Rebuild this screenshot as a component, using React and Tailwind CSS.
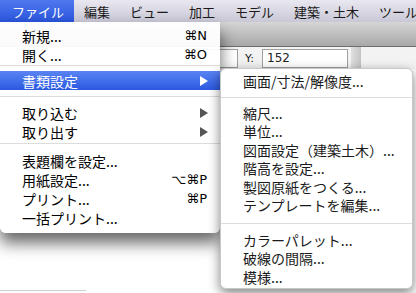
const menuBar = ['ファイル', '編集', 'ビュー', '加工', 'モデル', '建築・土木', 'ツール']

function Arrow({ white }) {
  return (
    <svg width="8" height="10" viewBox="0 0 8 10" className="shrink-0">
      <polygon points="0,0 8,5 0,10" fill={white ? '#ffffff' : '#555555'} />
    </svg>
  )
}

function Item({ label, shortcut, arrow, active }) {
  return (
    <div
      className={
        'flex h-[19px] items-center pl-[22px] pr-[12px] ' +
        (active ? 'bg-gradient-to-b from-[#5a84f3] to-[#2b58e0] text-white' : 'text-black')
      }
    >
      <span className="flex-1 whitespace-nowrap">{label}</span>
      {shortcut && <span className="whitespace-nowrap pr-[1px] font-['DejaVu_Sans','Noto_Sans_CJK_JP',sans-serif] text-[13px]">{shortcut}</span>}
      {arrow && <Arrow white={active} />}
    </div>
  )
}

function Sep({ h, top }) {
  return (
    <div className="flex flex-col" style={{ height: h }}>
      <div style={{ height: top }} />
      <div className="h-px bg-[#dcdcdc]" />
    </div>
  )
}

function SubItem({ label }) {
  return (
    <div className="flex h-[18.5px] items-center pl-[22px] text-[#1a1a1a] whitespace-nowrap">{label}</div>
  )
}

export default function App() {
  return (
    <div className="relative h-[293px] w-[416px] overflow-hidden bg-white font-['Noto_Sans_CJK_JP',sans-serif] text-[14px] leading-none">
      {/* menu bar */}
      <div className="flex h-[22px] items-stretch bg-gradient-to-b from-[#e9e8f0] to-[#c9c7d6] text-[13px] text-[#1a1a1a]">
        {menuBar.map((m, i) => (
          <div
            key={m}
            className={
              'flex items-center whitespace-nowrap ' +
              (i === 0 ? 'pl-[12px] pr-[10px] bg-gradient-to-b from-[#4f78ee] to-[#2a55dc] text-white' : 'px-[10px]')
            }
          >
            {m}
          </div>
        ))}
      </div>

      {/* window behind the menus */}
      <div className="h-[25px] border-b border-[#6e6e6e] bg-gradient-to-b from-[#d6d6d6] to-[#a8a8a8]" />
      <div className="flex h-[22px] items-center bg-[#f3f3f3] pl-[200px] font-['DejaVu_Sans',sans-serif] text-[11px] text-[#222]">
        <div className="h-[19px] w-[38px] border border-[#a0a0a0] bg-white" />
        <span className="ml-[7px] w-[17px]">Y:</span>
        <div className="flex h-[19px] w-[86px] items-center border border-[#a0a0a0] bg-white pl-[4px] text-[12px]">152</div>
        <div className="ml-[3px] h-[22px] w-[10px] bg-gradient-to-r from-[#e0e0e0] to-[#c4c4c4]" />
      </div>
      <div className="mt-[221px] h-px w-[86px] bg-[#cfcfcf]" />

      {/* file menu */}
      <div className="absolute left-0 top-[22px] h-[211px] w-[220px] rounded-b-[6px] bg-white/95 pt-[4px] shadow-[0_10px_16px_rgba(0,0,0,0.6)]">
        <Item label="新規..." shortcut="⌘N" />
        <Item label="開く..." shortcut="⌘O" />
        <Sep h={7} top={1} />
        <Item label="書類設定" arrow active />
        <Sep h={13} top={6} />
        <Item label="取り込む" arrow />
        <Item label="取り出す" arrow />
        <Sep h={10} top={2} />
        <Item label="表題欄を設定..." />
        <Item label="用紙設定..." shortcut="⌥⌘P" />
        <Item label="プリント..." shortcut="⌘P" />
        <Item label="一括プリント..." />
      </div>

      {/* submenu */}
      <div className="absolute left-[220px] top-[68px] h-[221px] w-[193px] rounded-[6px] border border-[#c8c8c8] bg-white pt-[3px] shadow-[0_4px_12px_rgba(0,0,0,0.5)]">
        <SubItem label="画面/寸法/解像度..." />
        <Sep h={13} top={6} />
        <SubItem label="縮尺..." />
        <SubItem label="単位..." />
        <SubItem label="図面設定（建築土木）..." />
        <SubItem label="階高を設定..." />
        <SubItem label="製図原紙をつくる..." />
        <SubItem label="テンプレートを編集..." />
        <Sep h={16} top={8} />
        <SubItem label="カラーパレット..." />
        <SubItem label="破線の間隔..." />
        <SubItem label="模様..." />
      </div>
    </div>
  )
}
